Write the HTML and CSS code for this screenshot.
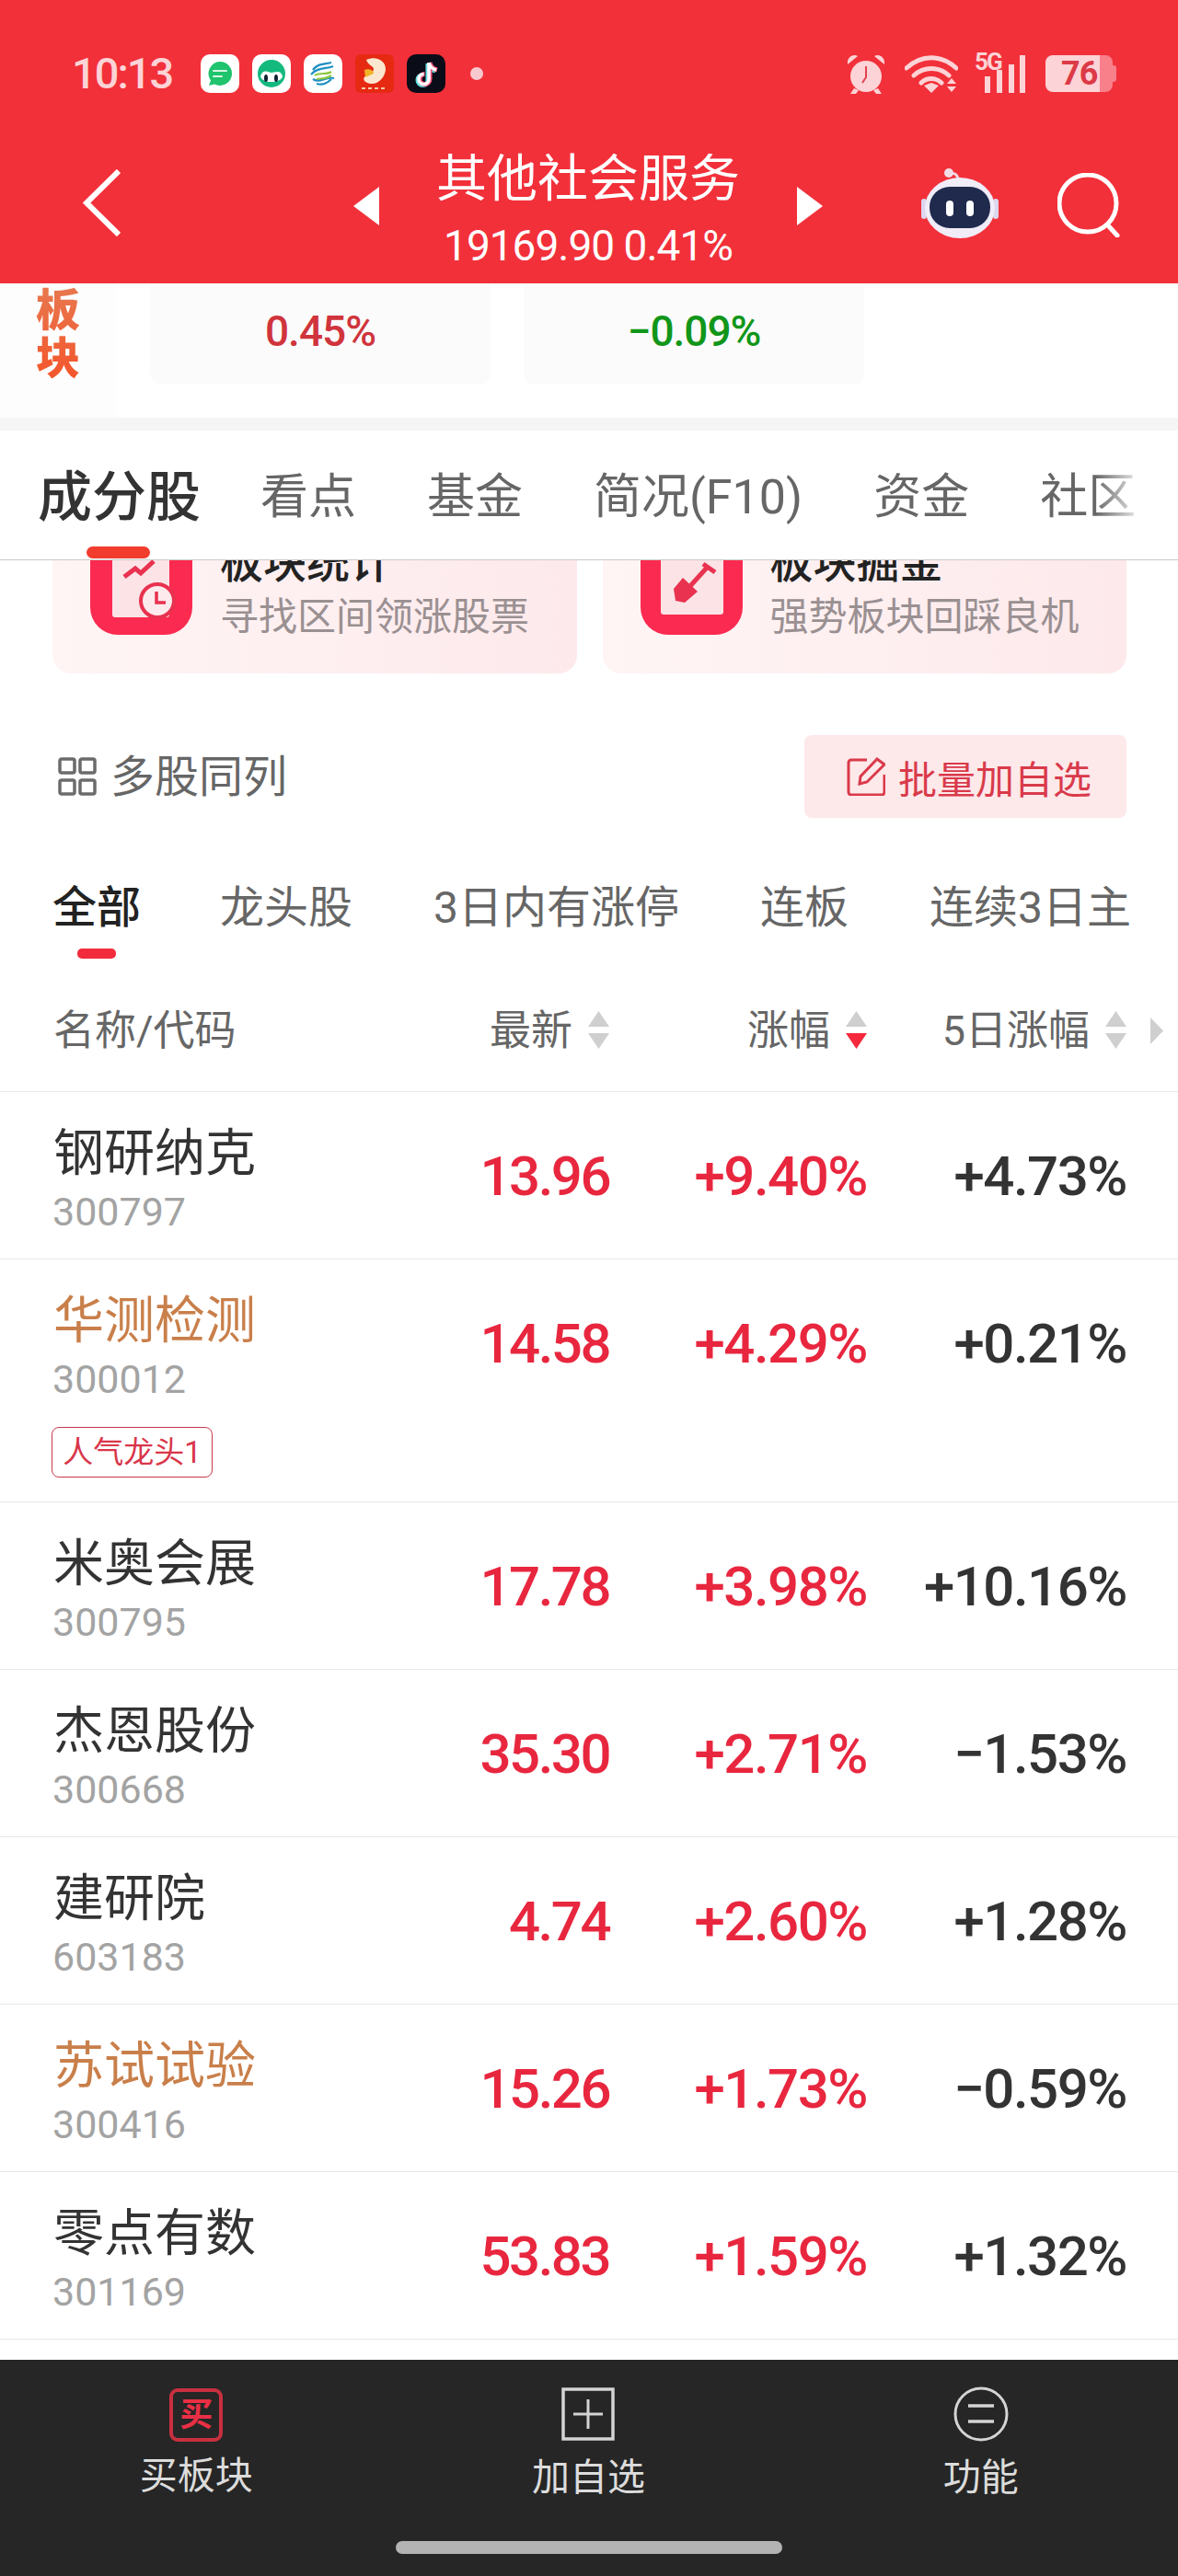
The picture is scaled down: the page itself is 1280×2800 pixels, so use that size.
FILE: index.html
```html
<!DOCTYPE html>
<html lang="zh-CN">
<head>
<meta charset="utf-8">
<title>其他社会服务</title>
<link rel="stylesheet" href="styles.css">
</head>
<body>
<div class="page">
  <header class="top">
    <div class="status">
      <span class="time">10:13</span>
      <div class="apps">
        <svg class="app" viewBox="0 0 42 42"><rect width="42" height="42" rx="10" fill="#fff"/><path d="M21 8a13 13 0 1 1-6 24.500L9 34l2-5.500A13 13 0 0 1 21 8z" fill="#1fc46d"/><path d="M14 18h14M14 24h9" stroke="#d9f7e4" stroke-width="2" stroke-linecap="round"/></svg>
        <svg class="app" viewBox="0 0 42 42"><rect width="42" height="42" rx="10" fill="#fff"/><circle cx="21" cy="21" r="15" fill="#14b97d"/><path d="M9 24c3-9 9-4 12-4s10-4 12 4c-2 8-22 8-24 0z" fill="#fff"/><ellipse cx="15" cy="26" rx="2" ry="4" fill="#123"/><ellipse cx="26" cy="26" rx="2" ry="4" fill="#123"/></svg>
        <svg class="app" viewBox="0 0 42 42"><rect width="42" height="42" rx="10" fill="#fff"/><path d="M10 17c6-8 14-6 20-8M8 22c6-8 18-6 24-9M10 27c8 5 14-3 23-1M14 32c6 2 12-1 16-5" fill="none" stroke="#1e90c4" stroke-width="2.200"/><path d="M12 23c6-4 12 0 18-4M14 27c6-1 10 0 16-4" fill="none" stroke="#8cc63f" stroke-width="2.200"/></svg>
        <svg class="app" viewBox="0 0 42 42"><rect width="42" height="42" rx="6" fill="#e62a12"/><path d="M12 6c11-5 21 1 21 10 0 8-8 17-16 16-8-1-10-6-5-9 4-3 8-3 8-7 0-3-6-4-8-10z" fill="#fbe7cf"/><path d="M10 17c4-2 10 0 10 4l-9 4z" fill="#f2b429"/><path d="M7 37h28" stroke="#f7c9a8" stroke-width="2" stroke-dasharray="4 3"/></svg>
        <svg class="app" viewBox="0 0 42 42"><rect width="42" height="42" rx="10" fill="#0a0c17"/><path d="M24 9v18a5.500 5.500 0 1 1-5.500-5.500M24 9c1 5 4 7 8 8" fill="none" stroke="#5ee4e8" stroke-width="5" transform="translate(-1 1)"/><path d="M24 9v18a5.500 5.500 0 1 1-5.500-5.500M24 9c1 5 4 7 8 8" fill="none" stroke="#f6577c" stroke-width="5" transform="translate(1 0)"/><path d="M24 9v18a5.500 5.500 0 1 1-5.500-5.500M24 9c1 5 4 7 8 8" fill="none" stroke="#fff" stroke-width="3.500"/></svg>
        <span class="dot"></span>
      </div>
      <div class="sys">
        <svg class="alarm" viewBox="0 0 44 45"><circle cx="22" cy="25" r="17" fill="#fcd3d6"/><path d="M2 12C1 4 8 0 13 3zM42 12c1-8-6-12-11-9z" fill="#fcd3d6"/><path d="M9 38l-4 6h6l3-4zM35 38l4 6h-6l-3-4z" fill="#fcd3d6"/><path d="M22 14v12l-4 6" fill="none" stroke="#e2434e" stroke-width="2"/></svg>
        <svg class="wifi" viewBox="0 0 58 41"><path d="M2 14c16-15 38-15 54 0M10 22c11-10 27-10 38 0M18 30c6-6 16-6 22 0" fill="none" stroke="#fcd3d6" stroke-width="5" stroke-linecap="round"/><path d="M21 33l8-3 8 3-8 8z" fill="#fcd3d6"/><path d="M46 31l5-6 5 6zM46 34h10l-5 6z" fill="#fcd3d6"/></svg>
        <div class="signal">
          <span class="five-g">5G</span>
          <span class="bar bar-1"></span><span class="bar bar-2"></span><span class="bar bar-3"></span><span class="bar bar-4"></span>
        </div>
        <div class="battery"><span class="level">76</span></div>
      </div>
    </div>
    <nav class="nav">
      <svg class="back" viewBox="0 0 41 73"><path d="M39 2L4 36.500 39 71" fill="none" stroke="#fff" stroke-width="6"/></svg>
      <svg class="tri tri-left" viewBox="0 0 28 42"><path d="M28 0v42L0 21z" fill="#fff"/></svg>
      <div class="heading">
        <div class="title">其他社会服务</div>
        <div class="quote">19169.90 0.41%</div>
      </div>
      <svg class="tri tri-right" viewBox="0 0 28 42"><path d="M0 0v42l28-21z" fill="#fff"/></svg>
      <svg class="robot" viewBox="0 0 84 77"><path d="M32 7c6-2 8 3 9 9" fill="none" stroke="#f3d3df" stroke-width="3"/><circle cx="30" cy="6" r="5" fill="#f3dce6"/><rect x="0" y="34" width="6" height="22" rx="3" fill="#dcd6ee"/><rect x="78" y="34" width="6" height="22" rx="3" fill="#dcd6ee"/><ellipse cx="42" cy="44" rx="38" ry="33" fill="#f0ecf8"/><rect x="9" y="21" width="66" height="45" rx="22" fill="#1f2a4d"/><rect x="27" y="36" width="8" height="17" rx="4" fill="#fff"/><rect x="49" y="36" width="8" height="17" rx="4" fill="#fff"/></svg>
      <svg class="search" viewBox="0 0 70 70"><circle cx="33" cy="33" r="31" fill="none" stroke="#fff" stroke-width="5"/><path d="M54 56l11 12" stroke="#fff" stroke-width="5" stroke-linecap="round"/></svg>
    </nav>
  </header>

  <section class="sector">
    <div class="sector-label"><span class="sector-text">板<br>块</span></div>
    <div class="sector-card"><span class="up">0.45%</span></div>
    <div class="sector-card"><span class="down">−0.09%</span></div>
  </section>
  <div class="band"></div>

  <div class="tabs">
    <span class="tab tab-active">成分股<i class="tab-mark"></i></span>
    <span class="tab">看点</span>
    <span class="tab">基金</span>
    <span class="tab">简况(F10)</span>
    <span class="tab">资金</span>
    <span class="tab">社区</span>
    <span class="tab-fade"></span>
  </div>

  <div class="tools">
    <div class="tool">
      <svg class="tool-icon" viewBox="0 0 111 111"><rect width="111" height="111" rx="30" fill="#fb2a50"/><rect x="24" y="0" width="62" height="92" rx="3" fill="#fbe3e6"/><path d="M37 48l12-9 6 5 14-13" fill="none" stroke="#e8324f" stroke-width="5"/><circle cx="73" cy="74" r="18" fill="#fdeaec" stroke="#e8324f" stroke-width="4"/><path d="M72 64v12h10" fill="none" stroke="#e8324f" stroke-width="3.500"/></svg>
      <div class="tool-text">
        <div class="tool-title">板块统计</div>
        <div class="tool-sub">寻找区间领涨股票</div>
      </div>
    </div>
    <div class="tool">
      <svg class="tool-icon" viewBox="0 0 111 111"><rect width="111" height="111" rx="30" fill="#fb2a50"/><rect x="22" y="0" width="68" height="89" rx="3" fill="#fbe3e6"/><path d="M72 38L54 58" stroke="#e8324f" stroke-width="5"/><path d="M68 34l13 9" stroke="#e8324f" stroke-width="5"/><path d="M36 61l10-12 16 15-14 12-10-2z" fill="#e8324f"/></svg>
      <div class="tool-text">
        <div class="tool-title">板块掘金</div>
        <div class="tool-sub">强势板块回踩良机</div>
      </div>
    </div>
  </div>

  <div class="multi">
    <div class="multi-left">
      <svg class="grid-icon" viewBox="0 0 42 42"><g fill="none" stroke="#6b6b6b" stroke-width="3.500"><rect x="2" y="2" width="16" height="15" rx="2"/><rect x="24" y="2" width="16" height="15" rx="2"/><rect x="2" y="25" width="16" height="15" rx="2"/><rect x="24" y="25" width="16" height="15" rx="2"/></g></svg>
      <span>多股同列</span>
    </div>
    <div class="batch">
      <svg class="edit-icon" viewBox="0 0 42 42"><path d="M22 3H5a3 3 0 0 0-3 3v32a3 3 0 0 0 3 3h33a3 3 0 0 0 3-3V19" fill="none" stroke="#d93a4a" stroke-width="3"/><path d="M14 29l1-8L33 2l8 6-19 19z" fill="none" stroke="#d93a4a" stroke-width="3"/></svg>
      <span>批量加自选</span>
    </div>
  </div>

  <div class="subtabs">
    <span class="subtab subtab-active">全部<i class="subtab-mark"></i></span>
    <span class="subtab">龙头股</span>
    <span class="subtab">3日内有涨停</span>
    <span class="subtab">连板</span>
    <span class="subtab">连续3日主</span>
  </div>

  <div class="thead">
    <span class="th-name">名称/代码</span>
    <span class="th"><span>最新</span><svg class="sort" viewBox="0 0 23 41"><path d="M11.500 0L23 17H0z" fill="#cfcfcf"/><path d="M0 24h23L11.500 41z" fill="#cfcfcf"/></svg></span>
    <span class="th"><span>涨幅</span><svg class="sort" viewBox="0 0 23 41"><path d="M11.500 0L23 17H0z" fill="#cfcfcf"/><path d="M0 24h23L11.500 41z" fill="#f5283c"/></svg></span>
    <span class="th"><span>5日涨幅</span><svg class="sort" viewBox="0 0 23 41"><path d="M11.500 0L23 17H0z" fill="#cfcfcf"/><path d="M0 24h23L11.500 41z" fill="#cfcfcf"/></svg></span>
    <svg class="more" viewBox="0 0 14 29"><path d="M0 0l14 14.500L0 29z" fill="#cfcfcf"/></svg>
  </div>

  <div class="row"><div class="stock"><div class="name">钢研纳克</div><div class="code">300797</div></div><div class="val price">13.96</div><div class="val red">+9.40%</div><div class="val dark">+4.73%</div></div>
  <div class="row"><div class="stock"><div class="name name-hot">华测检测</div><div class="code">300012</div><div class="tag">人气龙头1</div></div><div class="val price">14.58</div><div class="val red">+4.29%</div><div class="val dark">+0.21%</div></div>
  <div class="row"><div class="stock"><div class="name">米奥会展</div><div class="code">300795</div></div><div class="val price">17.78</div><div class="val red">+3.98%</div><div class="val dark">+10.16%</div></div>
  <div class="row"><div class="stock"><div class="name">杰恩股份</div><div class="code">300668</div></div><div class="val price">35.30</div><div class="val red">+2.71%</div><div class="val dark">−1.53%</div></div>
  <div class="row"><div class="stock"><div class="name">建研院</div><div class="code">603183</div></div><div class="val price">4.74</div><div class="val red">+2.60%</div><div class="val dark">+1.28%</div></div>
  <div class="row"><div class="stock"><div class="name name-hot">苏试试验</div><div class="code">300416</div></div><div class="val price">15.26</div><div class="val red">+1.73%</div><div class="val dark">−0.59%</div></div>
  <div class="row"><div class="stock"><div class="name">零点有数</div><div class="code">301169</div></div><div class="val price">53.83</div><div class="val red">+1.59%</div><div class="val dark">+1.32%</div></div>

  <footer class="foot">
    <div class="foot-items">
      <div class="foot-item"><span class="buy-icon">买</span><span class="foot-label">买板块</span></div>
      <div class="foot-item"><svg class="foot-icon" viewBox="0 0 60 60"><rect x="3" y="3" width="54" height="54" fill="none" stroke="#d4d4d4" stroke-width="3.500"/><path d="M30 14v32M14 30h32" stroke="#d4d4d4" stroke-width="3"/></svg><span class="foot-label">加自选</span></div>
      <div class="foot-item"><svg class="foot-icon" viewBox="0 0 60 60"><circle cx="30" cy="30" r="28" fill="none" stroke="#d4d4d4" stroke-width="3"/><path d="M16 21h28M16 38h28" stroke="#d4d4d4" stroke-width="3.500"/></svg><span class="foot-label">功能</span></div>
    </div>
    <div class="home-bar"></div>
  </footer>
</div>
</body>
</html>
```
FILE: styles.css
```css
* { box-sizing: border-box; }
html, body { margin: 0; padding: 0; background: #fff; }
body { font-family: Roboto, "Noto Sans CJK SC", sans-serif; color: #333; }
.page { width: 1280px; height: 2800px; display: flex; flex-direction: column; overflow: hidden; }

/* header */
.top { height: 308px; background: #f2303a; flex: none; }
.status { height: 160px; display: flex; align-items: center; padding: 0 67px 0 78px; color: #fcd3d6; }
.time { font-size: 47px; font-weight: 500; letter-spacing: -2px; width: 140px; line-height: 50px; }
.apps { display: flex; align-items: center; gap: 14px; }
.app { width: 42px; height: 42px; display: block; }
.dot { width: 14px; height: 14px; border-radius: 50%; background: #f7c9cf; margin-left: 13px; }
.sys { margin-left: auto; display: flex; align-items: center; }
.alarm { width: 44px; height: 45px; }
.wifi { width: 58px; height: 41px; margin-left: 20px; }
.signal { position: relative; width: 56px; height: 42px; margin-left: 18px; }
.five-g { position: absolute; left: 0; top: -6px; font-size: 26px; line-height: 28px; font-weight: 700; letter-spacing: -2px; }
.bar { position: absolute; bottom: 0; width: 6px; background: #fcd3d6; }
.bar-1 { left: 11px; height: 18px; }
.bar-2 { left: 24px; height: 25px; }
.bar-3 { left: 37px; height: 31px; }
.bar-4 { left: 49px; height: 41px; }
.battery { position: relative; width: 73px; height: 40px; margin-left: 21px; margin-right: 4px; border-radius: 8px; background: linear-gradient(to right, #fcd3d6 0 59px, #f8808b 59px); display: flex; align-items: center; padding-left: 17px; }
.battery::after { content: ""; position: absolute; left: 73px; top: 11px; width: 4px; height: 18px; border-radius: 0 3px 3px 0; background: #f8808b; }
.level { font-size: 36px; line-height: 40px; font-weight: 700; color: #dc3a46; letter-spacing: -1px; }

.nav { height: 148px; display: flex; align-items: flex-start; padding-left: 90px; }
.back { width: 41px; height: 73px; margin-top: 24px; flex: none; }
.tri { width: 28px; height: 42px; margin-top: 43px; flex: none; }
.tri-left { margin-left: 253px; }
.tri-right { margin-left: 65px; }
.heading { margin-left: 65px; width: 324px; color: #fff; text-align: center; white-space: nowrap; }
.title { font-size: 55px; line-height: 64px; margin-top: 2px; margin-left: -3px; margin-right: -3px; }
.quote { font-size: 46px; line-height: 52px; margin-top: 15px; letter-spacing: -1px; }
.robot { width: 84px; height: 77px; margin-left: 107px; margin-top: 22px; flex: none; }
.search { width: 70px; height: 70px; margin-left: 64px; margin-top: 28px; flex: none; }

/* sector strip */
.sector { height: 146px; flex: none; display: flex; overflow: hidden; background: #fff; }
.sector-label { width: 126px; background: #fdfdfd; padding: 4px 0 0 39px; }
.sector-text { display: block; width: 50px; font-size: 48px; line-height: 52px; font-weight: 900; background: linear-gradient(#e8784f, #f4542a); -webkit-background-clip: text; background-clip: text; color: transparent; }
.sector-card { width: 370px; height: 110px; margin-left: 37px; background: #fbfbfb; border-radius: 0 0 12px 12px; display: flex; align-items: center; justify-content: center; padding-bottom: 6px; font-size: 46px; font-weight: 500; letter-spacing: -1px; }
.sector-card + .sector-card { margin-left: 36px; }
.up { color: #d0343c; }
.down { color: #11961a; }
.band { height: 14px; background: #f5f5f5; flex: none; }

/* tabs */
.tabs { position: relative; flex: none; height: 141px; display: flex; align-items: center; padding: 6px 0 0 41px; border-bottom: 1px solid #c9c9c9; gap: 77px; overflow: hidden; background: #fff; }
.tab { position: relative; font-size: 52px; line-height: 70px; color: #666; white-space: nowrap; }
.tab-active { font-size: 59px; font-weight: 500; color: #333; margin-right: -12px; }
.tab-mark { position: absolute; left: 53px; bottom: -31px; width: 69px; height: 13px; border-radius: 7px; background: #f23c2e; }
.tab-fade { position: absolute; right: 0; top: 0; bottom: 0; width: 90px; background: linear-gradient(to right, rgba(255,255,255,0), #fff 60%); }

/* tools */
.tools { height: 123px; flex: none; overflow: hidden; display: flex; gap: 28px; padding: 0 56px 0 57px; }
.tool { flex: 1; height: 173px; margin-top: -50px; border-radius: 20px; background: linear-gradient(to right, #fff5f5, #fde9eb); display: flex; align-items: flex-start; padding: 20px 0 0 41px; }
.tool-icon { width: 111px; height: 111px; flex: none; }
.tool-text { margin-left: 30px; padding-top: 8px; white-space: nowrap; }
.tool-title { font-size: 47px; line-height: 50px; font-weight: 500; color: #222; }
.tool-sub { font-size: 42px; line-height: 50px; margin-top: 9px; color: #9a9092; }

/* multi row */
.multi { flex: none; display: flex; justify-content: space-between; align-items: center; padding: 67px 56px 0 63px; }
.multi-left { display: flex; align-items: center; gap: 15px; font-size: 48px; line-height: 60px; padding-top: 2px; color: #666; }
.grid-icon { width: 42px; height: 42px; margin-top: -2px; }
.batch { width: 350px; height: 90px; background: #fde8ea; border-radius: 8px; display: flex; align-items: center; padding-left: 46px; gap: 14px; font-size: 42px; color: #d93a4a; }
.edit-icon { width: 42px; height: 42px; flex: none; }

/* sub tabs */
.subtabs { flex: none; height: 90px; margin-top: 68px; display: flex; gap: 88px; padding-left: 57px; white-space: nowrap; }
.subtab { position: relative; font-size: 48px; line-height: 60px; height: 60px; color: #666; }
.subtab-active { color: #222; font-weight: 500; margin-right: -2px; }
.subtab-mark { position: absolute; left: 27px; top: 74px; width: 42px; height: 11px; border-radius: 5px; background: #f22c3d; }

/* table */
.thead, .row { display: grid; grid-template-columns: 1fr 200px 280px 282px; padding: 0 56px 0 58px; }
.thead { position: relative; flex: none; height: 140px; align-items: center; padding-top: 8px; border-bottom: 1px solid #e8e8e8; font-size: 45px; line-height: 60px; color: #666; }
.th { display: flex; justify-content: flex-end; align-items: center; gap: 17px; white-space: nowrap; }
.sort { width: 23px; height: 41px; flex: none; margin-top: -2px; }
.more { position: absolute; left: 1250px; top: 59px; width: 14px; height: 29px; }
.row { flex: none; border-bottom: 1px solid #e8e8e8; align-items: start; }
.stock { padding: 34px 0 26px; }
.name { font-size: 55px; line-height: 64px; color: #333; white-space: nowrap; }
.name-hot { color: #c97f4a; }
.code { font-size: 43px; line-height: 50px; margin-top: 7px; margin-left: -1px; color: #a3a3a3; }
.tag { width: 175px; height: 55px; margin-top: 27px; margin-left: -2px; border: 1px solid #c8384d; border-radius: 8px; font-size: 33px; line-height: 53px; color: #d9364a; text-align: center; white-space: nowrap; }
.val { font-size: 60px; line-height: 70px; padding-top: 57px; font-weight: 500; letter-spacing: -1.5px; text-align: right; white-space: nowrap; }
.red { color: #e8273f; }
.price { color: #e8273f; letter-spacing: -2.5px; }
.dark { color: #333; }

/* footer */
.foot { margin-top: auto; height: 235px; flex: none; background: #262626; display: flex; flex-direction: column; }
.foot-items { display: grid; grid-template-columns: repeat(3, 1fr); padding: 29px 1px 0 0; }
.foot-item { display: flex; flex-direction: column; align-items: center; }
.foot-icon { width: 60px; height: 60px; display: block; }
.buy-icon { width: 58px; height: 58px; margin-top: 2px; border: 4px solid #c8303f; border-radius: 9px; color: #ea2f45; font-size: 36px; line-height: 50px; font-weight: 700; text-align: center; }
.foot-label { font-size: 41px; line-height: 50px; margin-top: 14px; color: #dcdcdc; }
.buy-icon + .foot-label { margin-top: 12px; }
.home-bar { width: 420px; height: 14px; margin: 44px auto 0; border-radius: 7px; background: #b3b3b3; }
```
